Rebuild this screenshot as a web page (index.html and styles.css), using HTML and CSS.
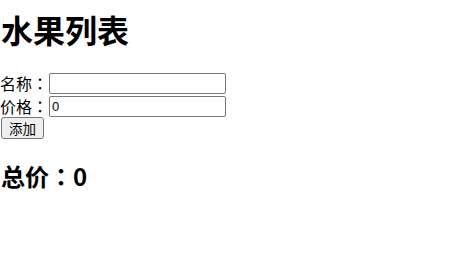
FILE: index.html
```html
<!DOCTYPE html>
<html lang="zh">
<head>
<meta charset="utf-8">
<link rel="stylesheet" href="styles.css">
</head>
<body>
<div class="app">
  <h1 class="title">水果列表</h1>
  <div class="row"><label class="lbl">名称<span class="colon" lang="zh-TW">：</span></label><input class="field" type="text"></div>
  <div class="row"><label class="lbl">价格<span class="colon" lang="zh-TW">：</span></label><input class="field" type="text" value="0"></div>
  <button class="btn">添加</button>
  <h2 class="total">总价<span class="colon" lang="zh-TW">：</span>0</h2>
</div>
</body>
</html>
```
FILE: styles.css
```css
html, body { margin: 0; padding: 0; background: #fff; }
body { font-family: "Noto Sans CJK SC", sans-serif; font-size: 16px; color: #000; }
.app { padding-top: 1px; }
.title { font-size: 32px; font-weight: bold; margin: 7px 0 22px 0; line-height: 42px; padding-left: 1px; }
.row { display: flex; align-items: center; height: 22px; line-height: 22px; }
.row + .row { margin-top: 1px; }
.lbl { font-size: 16px; }
.colon { font-family: "Noto Sans CJK TC", "Noto Sans CJK JP", sans-serif; }
.field { width: 177px; height: 21px; box-sizing: border-box; margin: 0 0 0 1px; padding: 1px 2px; border: 1px solid #767676; border-radius: 2px; font-family: "Liberation Sans", Arial, sans-serif; font-size: 13px; }
.btn { display: block; margin: 0 0 0 1px; height: 22px; padding: 0 7px; font-family: "Noto Sans CJK SC", sans-serif; font-size: 13.5px; border: 1px solid #767676; border-radius: 3px; background: #efefef; }
.total { font-size: 24px; font-weight: bold; margin: 21px 0 0 0; line-height: 32px; padding-left: 1px; }
```
